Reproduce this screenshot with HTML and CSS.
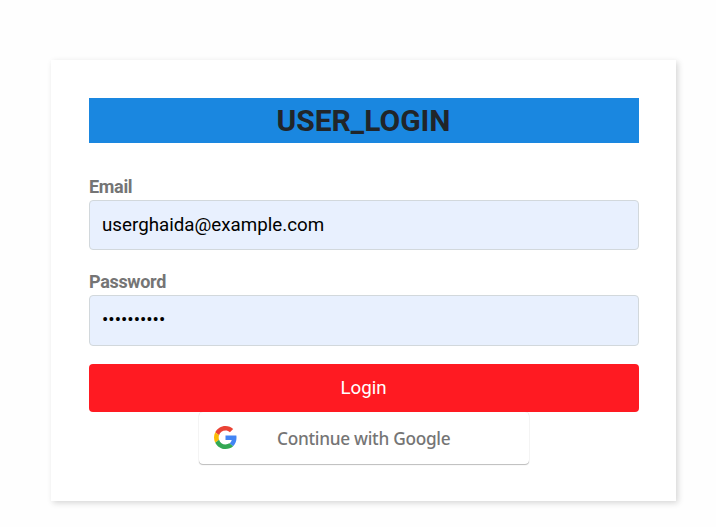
FILE: index.html
```html
<!DOCTYPE html>
<html lang="en">
<head>
<meta charset="utf-8">
<title>Login</title>
<link rel="stylesheet" href="styles.css">
</head>
<body>
<form class="card">
  <h2 class="title">USER_LOGIN</h2>
  <label class="label" for="email">Email</label>
  <input class="field" id="email" type="email" value="userghaida@example.com">
  <label class="label" for="password">Password</label>
  <input class="field field-password" id="password" type="password" value="abcdefghij">
  <button class="login" type="button">Login</button>
  <button class="google" type="button">
    <svg class="google-icon" viewBox="0 0 48 48" aria-hidden="true">
      <path fill="#EA4335" d="M24 9.5c3.54 0 6.71 1.22 9.21 3.6l6.85-6.85C35.9 2.38 30.47 0 24 0 14.62 0 6.51 5.38 2.56 13.22l7.98 6.19C12.43 13.72 17.74 9.5 24 9.5z"/>
      <path fill="#4285F4" d="M46.98 24.55c0-1.57-.15-3.09-.38-4.55H24v9.02h12.94c-.58 2.96-2.26 5.48-4.78 7.18l7.73 6c4.51-4.18 7.09-10.36 7.09-17.65z"/>
      <path fill="#FBBC05" d="M10.53 28.59c-.48-1.45-.76-2.99-.76-4.59s.27-3.14.76-4.59l-7.98-6.19C.92 16.46 0 20.12 0 24c0 3.88.92 7.54 2.56 10.78l7.97-6.19z"/>
      <path fill="#34A853" d="M24 48c6.48 0 11.93-2.13 15.89-5.81l-7.73-6c-2.15 1.45-4.92 2.3-8.16 2.3-6.26 0-11.57-4.22-13.47-9.91l-7.98 6.19C6.51 42.62 14.62 48 24 48z"/>
    </svg>
    <span class="google-text">Continue with Google</span>
  </button>
</form>
</body>
</html>
```

FILE: styles.css
```css
* { box-sizing: border-box; }
body {
  margin: 0;
  min-height: 527px;
  padding: 60px 40px 26px 51px;
  background: #fefefe;
  font-family: Roboto, "Liberation Sans", sans-serif;
}
.card {
  display: flex;
  flex-direction: column;
  width: 625px;
  height: 441px;
  padding: 38px 37px 0 38px;
  background: #fff;
  box-shadow: 2px 2px 6px rgba(0, 0, 0, 0.16);
}
.title {
  margin: 0 0 30px;
  padding-right: 1px;
  height: 45px;
  background: #1a87e0;
  color: #212529;
  font-size: 30px;
  font-weight: 700;
  line-height: 45px;
  text-align: center;
}
.label {
  height: 27px;
  color: #757575;
  font-size: 18px;
  font-weight: 700;
  line-height: 27px;
  letter-spacing: -0.32px;
}
.field {
  width: 100%;
  height: 50px;
  margin: 0 0 18px;
  padding: 0 12px;
  border: 1px solid #d2d8dc;
  border-radius: 4px;
  outline: none;
  background: #e8f0fe;
  color: #000;
  font: 18.75px/28px Roboto, sans-serif;
}
.field-password {
  height: 51px;
  padding-bottom: 1px;
}
.login {
  flex: none;
  height: 48px;
  padding: 0 1px 0 0;
  border: 0;
  border-radius: 4px;
  background: #ff1a22;
  color: #fff;
  font: 18.75px/48px Roboto, sans-serif;
}
.google {
  display: flex;
  align-items: center;
  align-self: center;
  width: 330px;
  height: 52px;
  padding: 0 15px;
  border: 0;
  border-radius: 4px;
  background: #fff;
  box-shadow: 0 1px 1px rgba(0, 0, 0, 0.25), 0 0 1px rgba(0, 0, 0, 0.2);
  clip-path: inset(0 -3px -3px);
}
.google-icon { width: 23px; height: 23px; margin-top: -1px; }
.google-text {
  margin: 2px 0 0 40px;
  color: #757575;
  font: 500 17.25px/24px "Noto Sans", sans-serif;
  letter-spacing: -0.28px;
}
```
